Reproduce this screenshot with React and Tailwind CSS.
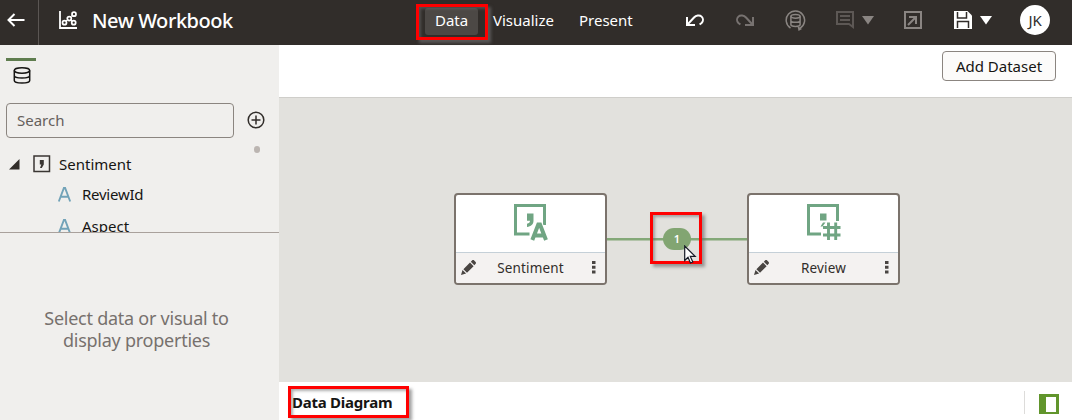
import React from "react";

function Callout({ className }) {
  return (
    <div
      className={`pointer-events-none absolute border-[3px] border-[#ff0000] shadow-[3px_3px_3px_rgba(110,110,110,0.65),inset_2px_2px_3px_rgba(110,110,110,0.55)] ${className}`}
    />
  );
}

function ChartIcon() {
  return (
    <svg width="18" height="18" viewBox="0 0 18 18" fill="none" stroke="#fff" strokeWidth="1.8" className="shrink-0">
      <path d="M1 0v17h17" />
      <path d="M6 11l4-4 5-4M10 7l4 4" strokeWidth="1" />
      <g fill="#312d2a" strokeWidth="1.7">
        <circle cx="5.5" cy="11.7" r="2" />
        <circle cx="10.3" cy="7.6" r="2" />
        <circle cx="15" cy="3.2" r="2" />
        <circle cx="14.7" cy="11.7" r="2" />
      </g>
    </svg>
  );
}

function UndoIcon({ className = "" }) {
  return (
    <svg width="18" height="13" viewBox="0 0 18 13" fill="none" stroke="currentColor" strokeWidth="2" className={`shrink-0 ${className}`}>
      <path d="M1 3v8h8M1.500 10.500l6.500-7C10 1.400 13.600 .6 15.600 2.600c1.800 1.800 1.800 4.600 0 6.400L13.600 10.500" />
    </svg>
  );
}

function RedoIcon({ className = "" }) {
  return (
    <svg width="18" height="13" viewBox="0 0 18 13" fill="none" stroke="currentColor" strokeWidth="2" className={`shrink-0 ${className}`}>
      <path d="M17 3v8H9M16.500 10.500l-6.500-7C8 1.400 4.400 .6 2.400 2.600c-1.800 1.800-1.800 4.600 0 6.400L4.400 10.500" />
    </svg>
  );
}

function RefreshDataIcon() {
  return (
    <svg width="21" height="21" viewBox="0 0 21 21" fill="none" stroke="#8a8582" strokeWidth="1.500" className="shrink-0">
      <path d="M5.500 18A9.200 9.200 0 1 1 15 18.200" />
      <path d="M12.500 16l4.500 3-3.500 2z" fill="#8a8582" stroke="none" />
      <ellipse cx="10.500" cy="6.300" rx="4.600" ry="1.900" />
      <path d="M5.900 6.300v8.200c0 2.500 9.200 2.500 9.200 0V6.300M5.900 10.400c0 2.500 9.200 2.500 9.200 0" />
    </svg>
  );
}

function CommentIcon() {
  return (
    <svg width="18" height="18" viewBox="0 0 18 18" fill="none" stroke="#5d5855" strokeWidth="2" className="shrink-0">
      <path d="M1 1h16v15l-4-3H1zM4 5h10M4 9h10" />
    </svg>
  );
}

function Caret({ className = "" }) {
  return (
    <svg width="12" height="9" viewBox="0 0 12 9" fill="currentColor" className={`shrink-0 ${className}`}>
      <path d="M0 0h12L6 8.500z" />
    </svg>
  );
}

function ExportIcon() {
  return (
    <svg width="18" height="18" viewBox="0 0 18 18" fill="none" stroke="#8a8582" strokeWidth="2" className="shrink-0">
      <path d="M1 1h16v16H1zM5 6h7v7M12 6l-8 8" />
    </svg>
  );
}

function SaveIcon() {
  return (
    <svg width="18" height="18" viewBox="0 0 18 18" className="shrink-0">
      <path fill="#fff" d="M0 0h13.500L18 4.500V18H0z" />
      <path fill="none" stroke="#312d2a" strokeWidth="1.500" d="M3.500 1v6h9V1M3.500 17v-6.500h11V17" />
    </svg>
  );
}

function Header() {
  return (
    <header className="relative flex h-[45px] shrink-0 bg-[#312d2a] text-white">
      <div className="flex w-[39px] shrink-0 items-center border-r border-[#5b5653] pb-[5px] pl-[7px]">
        <svg width="18" height="14" viewBox="0 0 18 14" fill="none" stroke="#fff" strokeWidth="2">
          <path d="M17.500 7H1.500M7.500 1l-6 6 6 6" />
        </svg>
      </div>
      <div className="flex w-[386px] shrink-0 items-center pb-[5px] pl-5">
        <ChartIcon />
        <h1 className="ml-[15px] mt-[2px] whitespace-nowrap text-[20px] font-medium leading-6 tracking-[-0.45px]">New Workbook</h1>
      </div>
      <nav className="flex h-[27px] w-[261px] shrink-0 pt-2 text-[15px] leading-[25px]">
        <div className="h-[27px] w-[53px] shrink-0 rounded-[3px] bg-[#4c4845] pl-[10px]">Data</div>
        <div className="ml-[15px] w-[86px] shrink-0">Visualize</div>
        <div>Present</div>
      </nav>
      <div className="flex h-10 items-center">
        <UndoIcon />
        <RedoIcon className="ml-8 text-[#777270]" />
        <div className="ml-[31px]"><RefreshDataIcon /></div>
        <div className="ml-[30px]"><CommentIcon /></div>
        <Caret className="ml-2 text-[#8a8582]" />
        <div className="ml-[30px]"><ExportIcon /></div>
        <div className="ml-8"><SaveIcon /></div>
        <Caret className="ml-2" />
        <div className="ml-[28px] flex size-[30px] items-center justify-center rounded-full bg-white text-[15px] tracking-[-0.3px] text-[#312d2a]">JK</div>
      </div>
      <Callout className="left-[416px] top-[4px] h-[36px] w-[72px]" />
    </header>
  );
}

function TypeA() {
  return (
    <svg width="13" height="15" viewBox="0 0 13 15" fill="none" stroke="#72a3b8" strokeWidth="1.900" className="shrink-0">
      <path d="M.8 14.500L5.900 1h1.200l5.100 13.500M3 9.800h7" />
    </svg>
  );
}

function Sidebar() {
  return (
    <aside className="flex w-[279px] shrink-0 flex-col bg-[#f0efed] text-[#161513]">
      <div className="flex h-[188px] shrink-0 flex-col overflow-hidden border-b border-[#a9a19c]">
        <div className="ml-[6px] mt-[13px] flex h-[45px] w-[30px] shrink-0 flex-col items-center border-t-[3px] border-[#5f7d4f] pt-[6px]">
          <svg width="18" height="17" viewBox="0 0 18 17" fill="none" stroke="#161513" strokeWidth="1.500" className="ml-[2px]">
            <ellipse cx="9" cy="3.500" rx="7.700" ry="2.700" />
            <path d="M1.300 3.500v10c0 3.400 15.400 3.400 15.400 0v-10M1.300 8.500c0 3.400 15.400 3.400 15.400 0" />
          </svg>
        </div>
        <div className="ml-[6px] flex shrink-0 items-center">
          <div className="h-[35px] w-[228px] rounded-[4px] border border-[#8b8580] pl-[10px] text-[15px] leading-[33px] text-[#65605c]">Search</div>
          <svg width="18" height="18" viewBox="0 0 18 18" fill="none" stroke="#312d2a" strokeWidth="1.500" className="mb-[2px] ml-[13px]">
            <circle cx="9" cy="9" r="7.800" />
            <path d="M9 4.500v9M4.500 9h9" />
          </svg>
        </div>
        <div className="flex shrink-0">
          <div className="w-[253px] pt-[11px] text-[15px]">
            <div className="flex h-[30px] items-center pl-[9px]">
              <svg width="11" height="11" viewBox="0 0 11 11" fill="#312d2a"><path d="M0 10.500L10.500 0v10.500z" /></svg>
              <svg width="18" height="18" viewBox="0 0 18 18" className="ml-[13px]">
                <path fill="none" stroke="#3a3633" strokeWidth="1.500" d="M1 1h15.500v15.500H1z" />
                <path fill="#3a3633" d="M6.800 5h4v4.500L8.800 13H7l1.300-3.500H6.800z" />
              </svg>
              <span className="ml-[8px]">Sentiment</span>
            </div>
            <div className="flex h-[31px] items-center pl-[58px]"><TypeA /><span className="ml-[11px] tracking-[-0.25px]">ReviewId</span></div>
            <div className="flex h-[32px] items-center pl-[58px]"><TypeA /><span className="ml-[11px]">Aspect</span></div>
          </div>
          <div className="ml-px mt-[8px] h-[7px] w-[6px] rounded-full bg-[#bbb5b1]" />
        </div>
      </div>
      <div className="flex-1 pt-[74px] text-center text-[18px] leading-[22px] tracking-[-0.25px] text-[#77716d]">
        <p className="ml-[-6px]">Select data or visual to<br />display properties</p>
      </div>
    </aside>
  );
}

function DatasetIcon({ numeric }) {
  return (
    <svg width="34" height="38" viewBox="0 0 34 38" fill="none" stroke="#70a583" strokeWidth="3">
      {numeric ? (
        <>
          <path d="M14 30H1.500V1.500H30.500V17" />
          <path d="M13 9.500h6.500v7H13zM16 18.500h2.500l-3 4h-2z" fill="#70a583" stroke="none" />
          <path d="M21.500 18.500v17.500M28.700 18.500v17.500M16 23.500h17.500M16 31h17.500" strokeWidth="2.900" />
        </>
      ) : (
        <>
          <path d="M15.500 30H1.500V1.500H30.500V21" />
          <path d="M13 9.500h6.500v7c0 4-2.500 6-6.500 6.500v-3.200c2-.5 3-1.500 3-3h-3z" fill="#70a583" stroke="none" />
          <path d="M18.300 36l6-15.500h1.700L32 36M20.500 31.500h9.500" stroke="#fff" strokeWidth="6" />
          <path d="M18.300 36l6-15.500h1.700L32 36M20.500 31.500h9.500" strokeWidth="4" />
        </>
      )}
    </svg>
  );
}

function DatasetCard({ name, numeric, className }) {
  return (
    <div className={`absolute flex h-[92px] w-[153px] flex-col overflow-hidden rounded-[4px] border-[2px] border-[#7b736c] bg-white ${className}`}>
      <div className="flex h-[57px] shrink-0 justify-center pt-[9px]"><DatasetIcon numeric={numeric} /></div>
      <div className="flex flex-1 items-center border-t border-[#c5d0d8] bg-[#f4f2f1] pl-[5px] pr-[9px] text-[13.500px] text-[#312d2a]">
        <svg width="15" height="15" viewBox="0 0 15 15" fill="#494542" className="mb-px shrink-0">
          <path d="M0 15l1.500-5 3.600 3.600zM2.400 9.200L9 2.600l3.600 3.600L6 12.800zM9.800 1.800L11.500.1h1.200l2.200 2.200v1.200l-1.600 1.700z" />
        </svg>
        <span className="flex-1 pr-[7px] text-center tracking-[0.15px]">{name}</span>
        <svg width="4" height="13" viewBox="0 0 4 13" fill="#494542" className="mb-px shrink-0"><path d="M0 0h3.500v3H0zM0 4.700h3.500v3H0zM0 9.400h3.500v3H0z" /></svg>
      </div>
    </div>
  );
}

function Diagram() {
  return (
    <section className="relative flex-1 border-t border-[#cfceca] bg-[#e2e1dd]">
      <div className="absolute left-[327px] top-[140px] h-[2px] w-[143px] bg-[#84a878] shadow-[0_0.5px_0_#84a878]" />
      <DatasetCard name="Sentiment" className="left-[175px] top-[95px]" />
      <DatasetCard name="Review" numeric className="left-[468px] top-[95px]" />
      <Callout className="left-[371px] top-[114px] h-[52px] w-[52px]" />
      <div className="absolute left-[384px] top-[130px] h-[22px] w-[28px] rounded-[11px] bg-[#82a572] text-center text-[11px] font-semibold leading-[22px] text-white">1</div>
      <svg width="13" height="20" viewBox="0 0 13 20" className="absolute left-[405px] top-[147px]">
        <path d="M.7 1v14.500l3.300-3.200 2.500 5.700 2.300-1-2.500-5.600h4.900z" fill="#fff" stroke="#161a26" strokeWidth="1.200" />
      </svg>
    </section>
  );
}

export default function App() {
  return (
    <div className="flex h-[420px] w-[1072px] flex-col overflow-hidden bg-white font-['Noto_Sans','Open_Sans',sans-serif]">
      <Header />
      <div className="flex min-h-0 flex-1">
        <Sidebar />
        <main className="flex flex-1 flex-col">
          <div className="flex h-[52px] shrink-0 justify-end pr-4 pt-[6px]">
            <button className="h-[30px] w-[114px] whitespace-nowrap rounded-[4px] border border-[#8b8580] bg-[#fcfbfa] text-[15px] leading-[28px] text-[#161513]">Add Dataset</button>
          </div>
          <Diagram />
          <footer className="relative flex h-[38px] shrink-0 pl-[13px]">
            <div className="flex-1 pt-[8px] text-[15px] font-bold leading-6 tracking-[-0.25px] text-[#161513]">Data Diagram</div>
            <div className="mt-[9px] h-[23px] w-px bg-[#dddcda]" />
            <div className="ml-[14px] mr-[13px] mt-[12px] h-[20px] w-[20px] border-[3px] border-b-[2px] border-l-[7px] border-[#61952c] bg-white" />
            <Callout className="left-[9px] top-[4px] h-[32px] w-[121px]" />
          </footer>
        </main>
      </div>
    </div>
  );
}
